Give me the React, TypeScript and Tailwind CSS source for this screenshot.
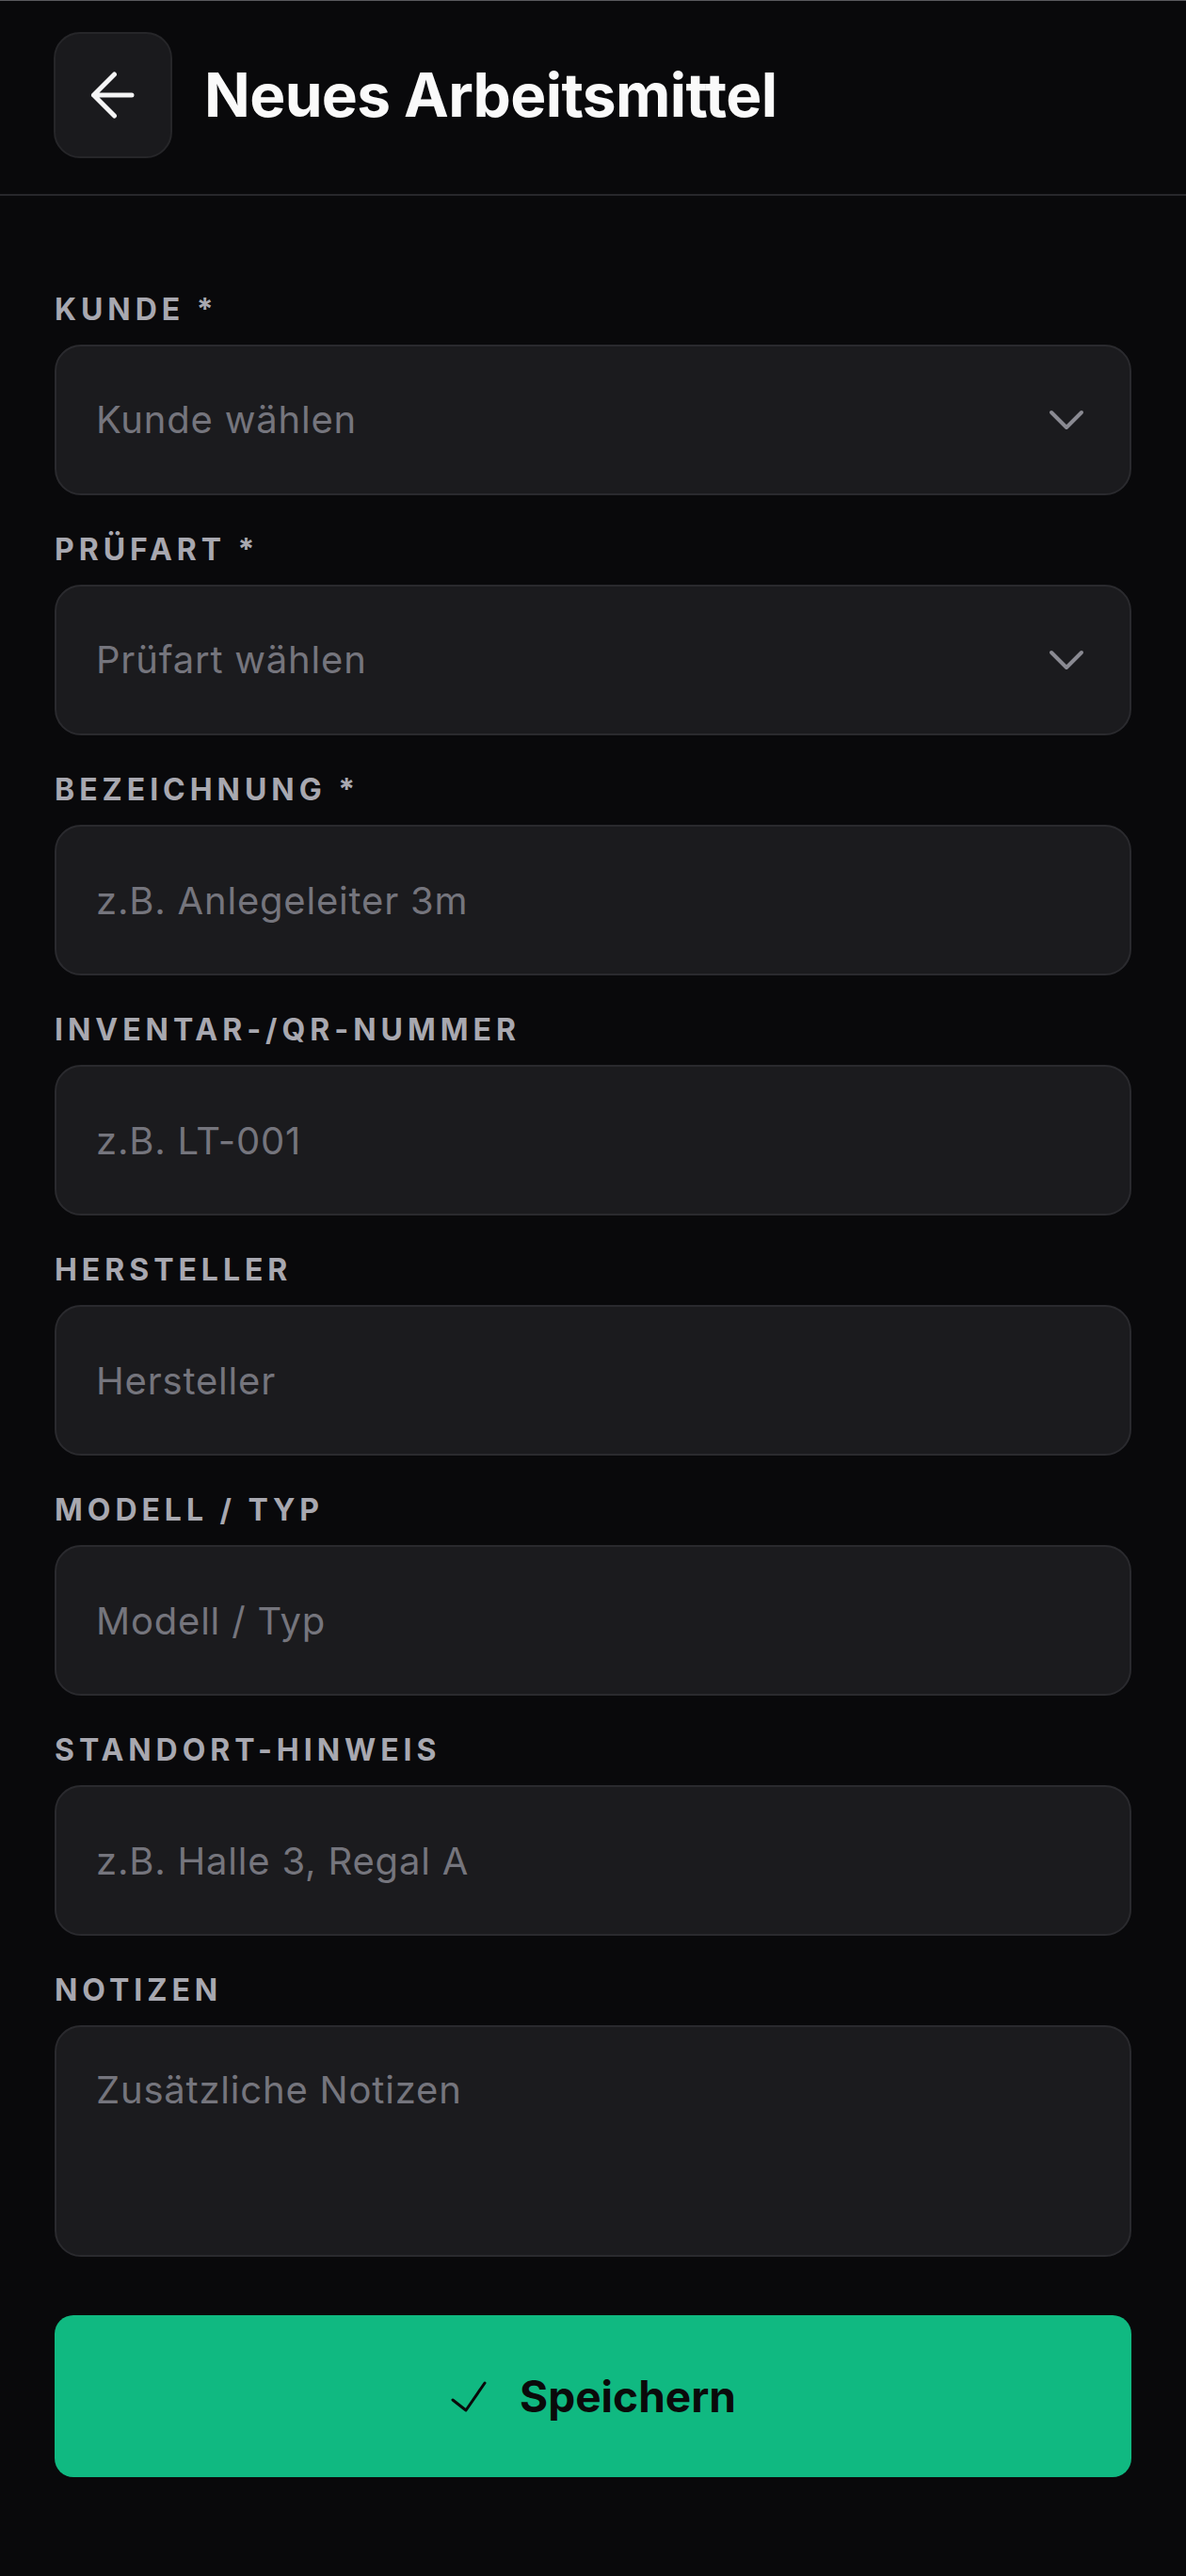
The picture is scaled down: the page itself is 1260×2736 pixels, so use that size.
import { useState } from "react";

type Field = {
  label: string;
  placeholder: string;
  kind: "select" | "input";
};

const fields: Field[] = [
  { label: "Kunde *", placeholder: "Kunde wählen", kind: "select" },
  { label: "Prüfart *", placeholder: "Prüfart wählen", kind: "select" },
  { label: "Bezeichnung *", placeholder: "z.B. Anlegeleiter 3m", kind: "input" },
  { label: "Inventar-/QR-Nummer", placeholder: "z.B. LT-001", kind: "input" },
  { label: "Hersteller", placeholder: "Hersteller", kind: "input" },
  { label: "Modell / Typ", placeholder: "Modell / Typ", kind: "input" },
  { label: "Standort-Hinweis", placeholder: "z.B. Halle 3, Regal A", kind: "input" },
];

function Label({ children }: { children: string }) {
  return (
    <label className="block h-[38px] text-[32px] leading-[38px] font-bold uppercase tracking-[0.155em] text-[#a8a8b0] mb-[18px]">
      {children}
    </label>
  );
}

function Chevron() {
  return (
    <svg width="38" height="24" viewBox="0 0 38 24" fill="none" className="shrink-0">
      <path
        d="M3 4 L19 20 L35 4"
        stroke="#8a8a92"
        strokeWidth="4"
        strokeLinecap="round"
        strokeLinejoin="round"
      />
    </svg>
  );
}

function App() {
  const [values, setValues] = useState<Record<string, string>>({});

  const update = (key: string, value: string) => {
    setValues((prev) => ({ ...prev, [key]: value }));
  };

  return (
    <div className="min-h-screen bg-[#09090b] font-['Inter','Noto_Sans',sans-serif] border-t border-[#5a5a5e]">
      <header className="flex items-center gap-[34px] px-[57px] pt-[33px] pb-[38px] border-b-2 border-[#27272b]">
        <button className="flex items-center justify-center w-[126px] h-[134px] rounded-[28px] bg-[#1a1a1d] border-2 border-[#262629]">
          <svg width="50" height="50" viewBox="0 0 50 50" fill="none">
            <path
              d="M26.5 3 L4.5 25 L26.5 47 M4.5 25 H45"
              stroke="#f4f4f5"
              strokeWidth="5"
              strokeLinecap="round"
              strokeLinejoin="round"
            />
          </svg>
        </button>
        <h1 className="text-[64px] font-bold text-[#fafafa] tracking-[-0.01em]">Neues Arbeitsmittel</h1>
      </header>

      <main className="px-[58px] pt-[102px] pb-[105px]">
        <div className="flex flex-col gap-[39px]">
          {fields.map((field) => (
            <div key={field.label}>
              <Label>{field.label}</Label>
              {field.kind === "select" ? (
                <div className="flex items-center justify-between h-[160px] pl-[42px] pr-[48px] rounded-[28px] bg-[#1b1b1e] border-2 border-[#2a2a2e]">
                  <span className="text-[40px] tracking-[0.02em] text-[#75757d]">{field.placeholder}</span>
                  <Chevron />
                </div>
              ) : (
                <input
                  value={values[field.label] || ""}
                  onChange={(e) => update(field.label, e.target.value)}
                  placeholder={field.placeholder}
                  className="block w-full h-[160px] px-[42px] rounded-[28px] bg-[#1b1b1e] border-2 border-[#2a2a2e] text-[40px] tracking-[0.02em] text-[#f4f4f5] placeholder:text-[#75757d] outline-none"
                />
              )}
            </div>
          ))}

          <div>
            <Label>Notizen</Label>
            <textarea
              value={values.notes || ""}
              onChange={(e) => update("notes", e.target.value)}
              placeholder="Zusätzliche Notizen"
              className="block w-full h-[246px] px-[42px] pt-[37px] leading-[60px] rounded-[28px] bg-[#1b1b1e] border-2 border-[#2a2a2e] text-[40px] tracking-[0.02em] text-[#f4f4f5] placeholder:text-[#75757d] outline-none resize-none"
            />
          </div>
        </div>

        <button className="mt-[62px] flex items-center justify-center gap-[34px] w-full h-[172px] rounded-[20px] bg-[#10b981] text-[46px] font-bold text-[#0a0a0a]">
          <svg width="40" height="36" viewBox="0 0 40 36" fill="none">
            <path
              d="M3 22 L17 33 L37 4"
              stroke="#0a0a0a"
              strokeWidth="3"
              strokeLinecap="round"
              strokeLinejoin="round"
            />
          </svg>
          <span>Speichern</span>
        </button>
      </main>
    </div>
  );
}

export default App;
